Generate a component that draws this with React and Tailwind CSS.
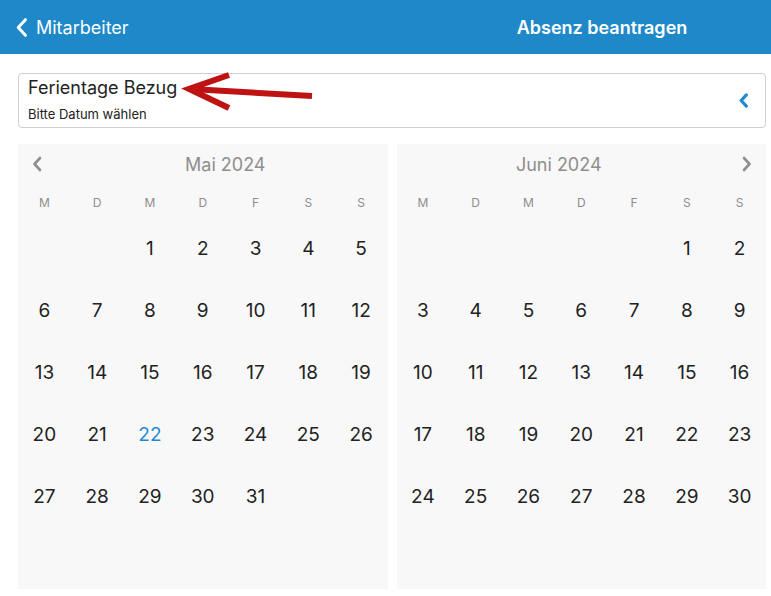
import React from 'react'

const WEEKDAYS = ['M', 'D', 'M', 'D', 'F', 'S', 'S']

// leading blanks (Monday-first) and number of days
const MONTHS = [
  { title: 'Mai 2024', offset: 2, days: 31, prev: true },
  { title: 'Juni 2024', offset: 5, days: 30, next: true },
]

function Chevron({ dir = 'left', className = '', width = 2.6 }) {
  return (
    <svg viewBox="0 0 10 16" className={className} fill="none" stroke="currentColor" strokeWidth={width} strokeLinecap="round" strokeLinejoin="round">
      {dir === 'left' ? <path d="M8 2 L2.5 8 L8 14" /> : <path d="M2 2 L7.5 8 L2 14" />}
    </svg>
  )
}

function Month({ m }) {
  const cells = []
  for (let i = 0; i < m.offset; i++) cells.push(null)
  for (let d = 1; d <= m.days; d++) cells.push(d)
  while (cells.length < 42) cells.push(null)

  return (
    <div className="flex-1 bg-[#f8f8f8]">
      <div className={`h-[40px] flex items-center text-[18px] text-[#8e8e8e] ${m.next ? 'flex-row-reverse' : ''}`}>
        <div className={`w-[45px] flex items-center ${m.next ? 'justify-end pr-[14px]' : 'pl-[14px]'}`}>
          {m.prev && <Chevron dir="left" className="w-[10px] h-[16px]" />}
          {m.next && <Chevron dir="right" className="w-[10px] h-[16px]" />}
        </div>
        <span className="flex-1 text-center">{m.title}</span>
      </div>
      <div className="grid grid-cols-7 h-[33px] items-center text-[12px] text-[#8e8e8e]">
        {WEEKDAYS.map((w, i) => (
          <div key={i} className="text-center pt-[5px]">{w}</div>
        ))}
      </div>
      <div className="grid grid-cols-7">
        {cells.map((d, i) => (
          <div key={i} className={`h-[62px] flex items-center justify-center text-[19px] pt-[2px] ${d === 22 && m.prev ? 'text-[#1f8ad0]' : 'text-[#222]'}`}>
            {d}
          </div>
        ))}
      </div>
    </div>
  )
}

export default function App() {
  return (
    <div className="w-[771px] h-[596px] bg-white overflow-hidden" style={{ fontFamily: 'Inter, "Noto Sans", sans-serif' }}>
      {/* Header */}
      <div className="h-[54px] bg-[#1e88c9] flex items-center text-white">
        <div className="w-[433px] flex items-center pl-[15px]">
          <Chevron dir="left" className="w-[13px] h-[21px] mr-[8px]" width={2.3} />
          <span className="text-[18px]">Mitarbeiter</span>
        </div>
        <div className="flex-1 text-center text-[18px] font-semibold">Absenz beantragen</div>
      </div>

      {/* Selection card */}
      <div className="pl-[18px] pr-[5px] pt-[19px] pb-[16px]">
        <div className="relative h-[55px] border border-[#cfcfcf] rounded-[4px] pl-[9px] flex flex-col">
          <span className="text-[18px] text-[#222] leading-[22px] pt-[3px]">Ferientage Bezug</span>
          <span className="text-[13px] text-[#222] leading-[16px] pt-[7px]">Bitte Datum wählen</span>
          <Chevron dir="left" className="absolute right-[16px] top-[19px] w-[11px] h-[15px] text-[#1f8ad0]" width={3.4} />
          <svg className="absolute left-[142px] top-[-9px] w-[160px] h-[60px]" viewBox="0 0 160 60" fill="none" stroke="#bf1212" strokeWidth="6" strokeLinecap="butt">
            <path d="M151 31 L30 24" />
            <path d="M68 10 L28 24 L68 43" strokeLinejoin="miter" />
          </svg>
        </div>
      </div>

      {/* Calendars */}
      <div className="flex gap-[9px] pl-[18px] pr-[5px]">
        {MONTHS.map(m => <Month key={m.title} m={m} />)}
      </div>
    </div>
  )
}
